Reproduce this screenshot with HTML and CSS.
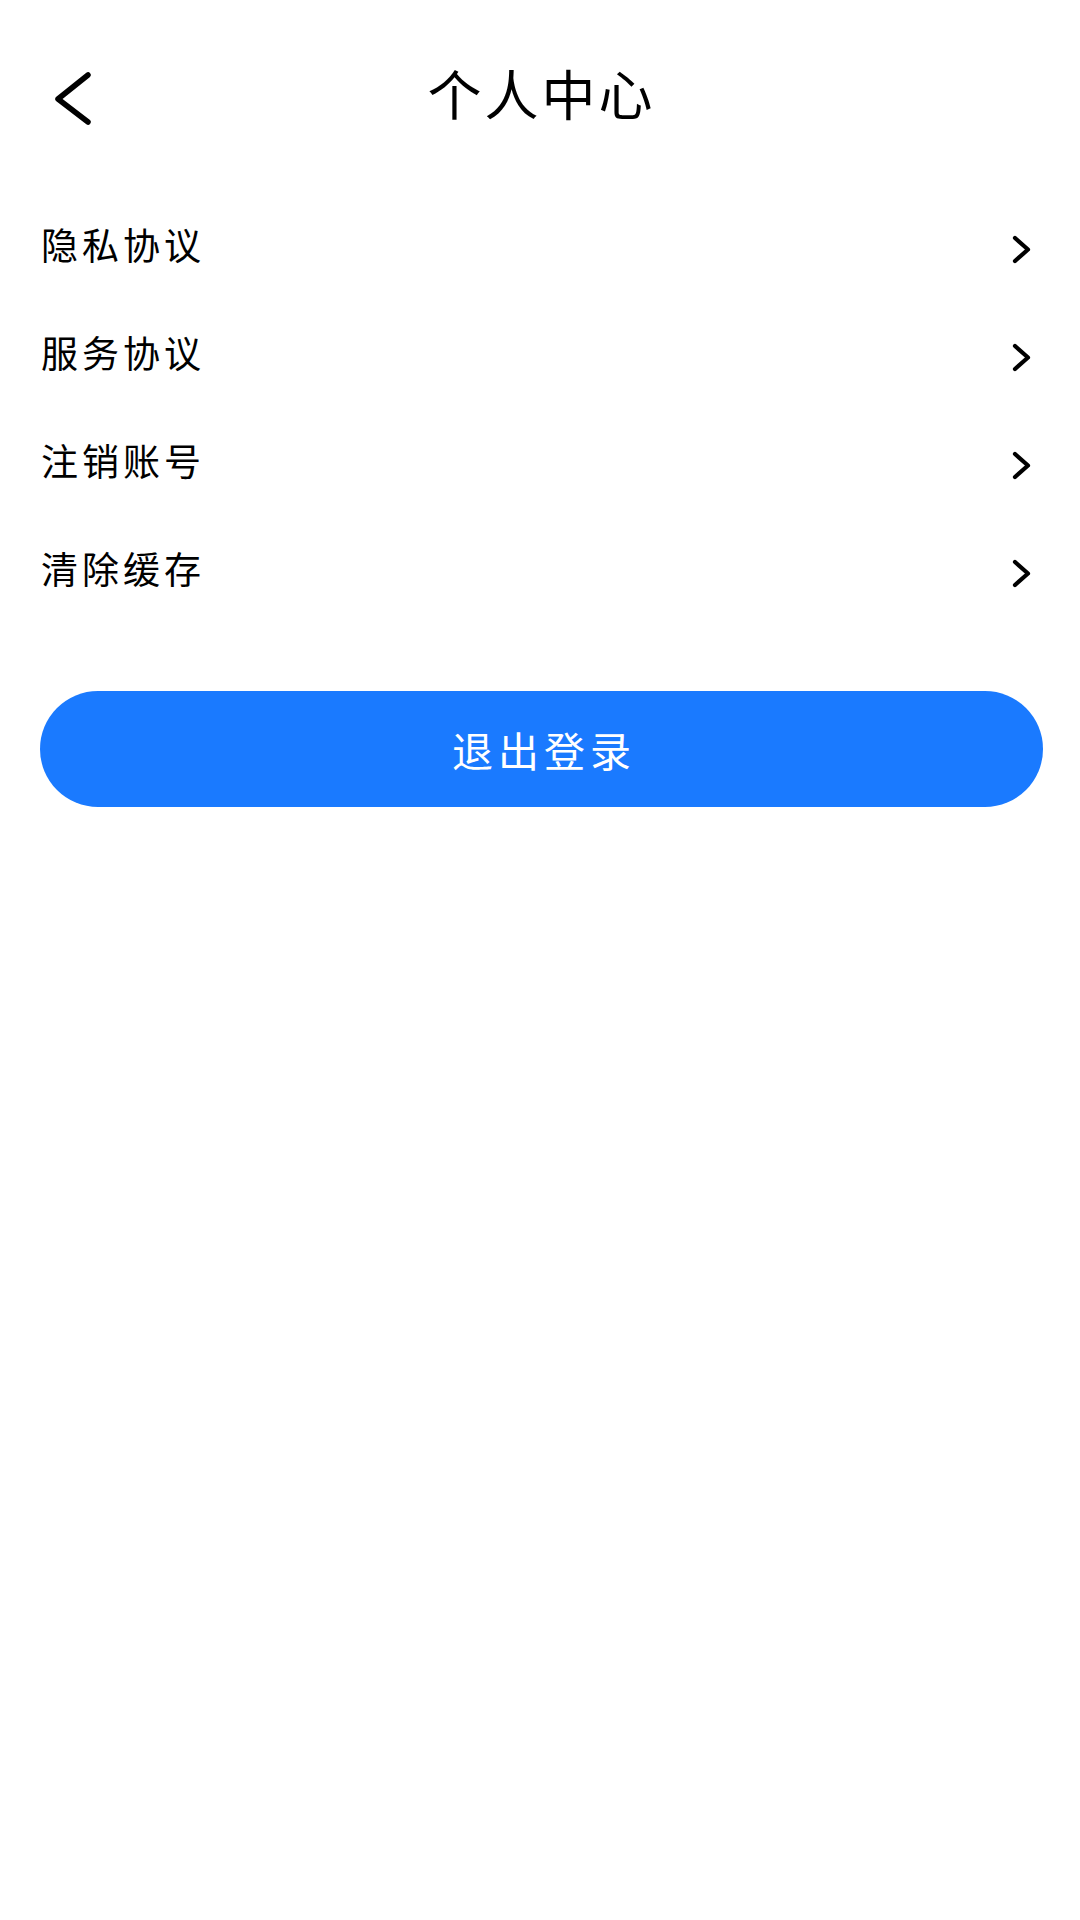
FILE: index.html
```html
<!DOCTYPE html>
<html lang="zh-CN">
<head>
<meta charset="utf-8">
<title>个人中心</title>
<link rel="stylesheet" href="styles.css">
</head>
<body>
<div class="page">
  <header class="topbar">
    <div class="back">
      <svg width="40" height="56" viewBox="0 0 40 56"><polyline points="33,4 3,28 33,51" fill="none" stroke="#000" stroke-width="5.5" stroke-linecap="round" stroke-linejoin="round"/></svg>
    </div>
    <h1 class="title">个人中心</h1>
    <div class="spacer"></div>
  </header>
  <ul class="menu">
    <li class="row"><span class="label">隐私协议</span><svg class="chev" width="24" height="30" viewBox="0 0 24 30"><polyline points="5,4 18,15.5 5,27" fill="none" stroke="#000" stroke-width="4.2" stroke-linecap="round" stroke-linejoin="round"/></svg></li>
    <li class="row"><span class="label">服务协议</span><svg class="chev" width="24" height="30" viewBox="0 0 24 30"><polyline points="5,4 18,15.5 5,27" fill="none" stroke="#000" stroke-width="4.2" stroke-linecap="round" stroke-linejoin="round"/></svg></li>
    <li class="row"><span class="label">注销账号</span><svg class="chev" width="24" height="30" viewBox="0 0 24 30"><polyline points="5,4 18,15.5 5,27" fill="none" stroke="#000" stroke-width="4.2" stroke-linecap="round" stroke-linejoin="round"/></svg></li>
    <li class="row"><span class="label">清除缓存</span><svg class="chev" width="24" height="30" viewBox="0 0 24 30"><polyline points="5,4 18,15.5 5,27" fill="none" stroke="#000" stroke-width="4.2" stroke-linecap="round" stroke-linejoin="round"/></svg></li>
  </ul>
  <button class="logout">退出登录</button>
</div>
</body>
</html>
```
FILE: styles.css
```css
* { box-sizing: border-box; }
html, body {
  margin: 0;
  padding: 0;
  background: #ffffff;
}
body {
  font-family: "Noto Sans CJK SC", "Noto Sans", sans-serif;
  color: #000;
}
.page {
  width: 1080px;
  min-height: 1920px;
  background: #fff;
}
.topbar {
  height: 192px;
  display: grid;
  grid-template-columns: 1fr auto 1fr;
  align-items: center;
}
.back {
  padding-left: 55px;
  padding-top: 6px;
  display: flex;
  align-items: center;
}
.back svg { display: block; }
.title {
  margin: 0 0 6px 0;
  font-size: 54px;
  font-weight: 400;
  letter-spacing: 3px;
  padding-left: 3px;
  line-height: 1;
}
.menu {
  list-style: none;
  margin: 0;
  padding: 0;
}
.row {
  height: 108px;
  display: flex;
  align-items: center;
  justify-content: space-between;
  padding: 0 46px 0 41px;
}
.label {
  font-size: 37px;
  letter-spacing: 4px;
  line-height: 1;
  margin-bottom: 3px;
}
.chev {
  display: block;
  margin-top: 6px;
}
.logout {
  display: block;
  margin: 67px 37px 0 40px;
  width: 1003px;
  height: 116px;
  border: none;
  border-radius: 58px;
  background: #1a7aff;
  color: #fff;
  font-family: "Noto Sans CJK SC", "Noto Sans", sans-serif;
  font-size: 41px;
  letter-spacing: 5px;
  padding: 0 0 0 5px;
  line-height: 1;
}
```
